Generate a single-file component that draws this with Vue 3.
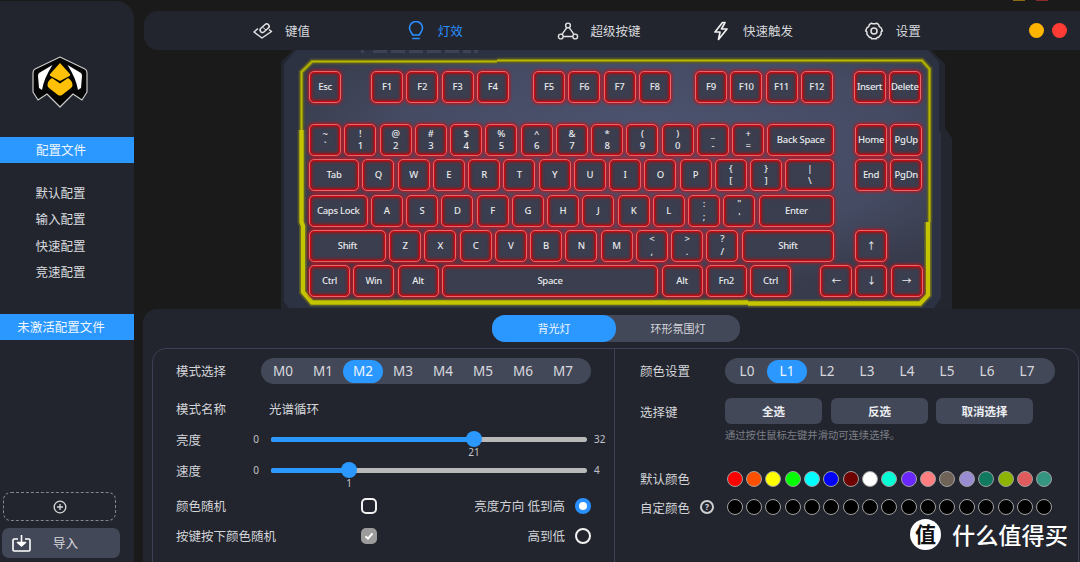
<script setup>
const k = (l, w = 32) => ({ l, w })
const d = (t, b) => ({ t, b, w: 32 })
const s = (sp) => ({ sp })
const keyRows = [
  [k('Esc'), s(23.5), k('F1'), k('F2'), k('F3'), k('F4'), s(17.75), k('F5'), k('F6'), k('F7'), k('F8'), s(17.75), k('F9'), k('F10'), k('F11'), k('F12'), s(14.25), k('Insert'), k('Delete')],
  [d('~', '`'), d('!', '1'), d('@', '2'), d('#', '3'), d('$', '4'), d('%', '5'), d('^', '6'), d('&', '7'), d('*', '8'), d('(', '9'), d(')', '0'), d('_', '-'), d('+', '='), k('Back Space', 67), s(14.25), k('Home'), k('PgUp')],
  [k('Tab', 50), k('Q'), k('W'), k('E'), k('R'), k('T'), k('Y'), k('U'), k('I'), k('O'), k('P'), d('{', '['), d('}', ']'), { t: '|', b: '\\', w: 49 }, s(14.25), k('End'), k('PgDn')],
  [k('Caps Lock', 58.5), k('A'), k('S'), k('D'), k('F'), k('G'), k('H'), k('J'), k('K'), k('L'), d(':', ';'), d('"', "'"), k('Enter', 75.75)],
  [k('Shift', 76.75), k('Z'), k('X'), k('C'), k('V'), k('B'), k('N'), k('M'), d('<', ','), d('>', '.'), d('?', '/'), k('Shift', 92.75), s(14.25), k('↑')],
  [k('Ctrl', 41), k('Win', 41), k('Alt', 41), k('Space', 216.5), k('Alt', 41), k('Fn2', 41), k('Ctrl', 41), s(22.5), k('←'), k('↓'), k('→')]
]
const modes = ['M0', 'M1', 'M2', 'M3', 'M4', 'M5', 'M6', 'M7']
const layers = ['L0', 'L1', 'L2', 'L3', 'L4', 'L5', 'L6', 'L7']
const presets = ['#ff0000', '#ff5000', '#ffff00', '#00ff00', '#00ffff', '#0000ff', '#6e0000', '#ffffff', '#00ffd5', '#6a28ff', '#ff7f80', '#6f6257', '#9a8cd0', '#10795f', '#8cb400', '#e05c5c', '#349680']
const customs = Array.from({ length: 17 }, (_, i) => i)
const profiles = ['默认配置', '输入配置', '快速配置', '竞速配置']
</script>

<template>
  <div class="app">
    <aside class="side">
      <svg class="logo" width="58" height="54" viewBox="31 55 58 54">
        <path d="M60 57 L85 69 Q87 70 87 73 L87 92 L82 100 L73 94 L60 107 L47 94 L38 100 L33 92 L33 73 Q33 70 35 69 Z" fill="#050505" stroke="#c9c9c9" stroke-width="1.2" stroke-linejoin="round"/>
        <path d="M52.5 65 L39 73 Q38 74 38 76 L39 88 L42 90 Q44 78 52.5 65 Z" fill="#fff"/>
        <path d="M67.5 65 L81 73 Q82 74 82 76 L81 88 L78 90 Q76 78 67.5 65 Z" fill="#fff"/>
        <path d="M60 63 L69 73 Q71 75 69.5 76 L60 81 L50.5 76 Q49 75 51 73 Z" fill="#ffc107"/>
        <path d="M52 78 L60 83.5 L68 78 Q72.5 81 72.5 85 Q72.5 87 71 88 L62 95 Q60 96 58 95 L49 88 Q47.5 87 47.5 85 Q47.5 81 52 78 Z" fill="#ffc107"/>
      </svg>
      <div class="band band-top">配置文件</div>
      <ul class="plist">
        <li v-for="p in profiles" :key="p">{{ p }}</li>
      </ul>
      <div class="band band-inactive">未激活配置文件</div>
      <div class="add">
        <svg width="14" height="14" viewBox="0 0 14 14" fill="none" stroke="#d8d8d8" stroke-width="1.3">
          <circle cx="7" cy="7" r="5.8"/><path d="M4 7h6M7 4v6"/>
        </svg>
      </div>
      <div class="import">
        <svg width="20" height="18" viewBox="0 0 20 18" fill="none" stroke="#fff" stroke-width="1.6" stroke-linejoin="round">
          <path d="M6 5H2.2Q1 5 1 6.2V15.8Q1 17 2.2 17H16.8Q18 17 18 15.8V6.2Q18 5 16.8 5H13"/>
          <path d="M9.5 1V10" />
          <path d="M5.5 8.5L9.5 12L13.5 8.5Z" fill="#fff"/>
        </svg>
        <span>导入</span>
      </div>
    </aside>

    <main class="main">
      <header class="top">
        <div class="nav">
          <div class="nav-item">
            <svg class="ic" width="22" height="20" viewBox="0 0 22 20" fill="none" stroke="#e4e4e4" stroke-width="1.5" stroke-linejoin="round">
              <path d="M6 7.5L2 11L10 17L19.5 10.5L17 8.5"/>
              <rect x="-2.2" y="-5.2" width="4.8" height="10.4" rx="2.4" transform="translate(12.5 7) rotate(48)"/>
              <path d="M11 6.5L14 9" stroke-width="1"/>
            </svg>
            <span>键值</span>
          </div>
          <div class="nav-item on">
            <svg class="ic" width="22" height="20" viewBox="0 0 22 20" fill="none" stroke="#2a8fff" stroke-width="1.6" stroke-linecap="round">
              <path d="M7.6 14C7 11.5 4.5 10.5 4.5 7A6.5 6.5 0 0 1 17.5 7C17.5 10.5 15 11.5 14.4 14Z" stroke-linejoin="round"/>
              <path d="M7.8 17.5H14.2"/>
            </svg>
            <span>灯效</span>
          </div>
          <div class="nav-item">
            <svg class="ic" width="22" height="20" viewBox="0 0 22 20" fill="none" stroke="#e4e4e4" stroke-width="1.4">
              <circle cx="11" cy="4.5" r="2.4"/><circle cx="3.8" cy="15.5" r="2.4"/><circle cx="18.2" cy="15.5" r="2.4"/>
              <path d="M9.8 6.6L5 13.4M12.2 6.6L17 13.4M6.2 15.5H15.8"/>
            </svg>
            <span>超级按键</span>
          </div>
          <div class="nav-item">
            <svg class="ic" width="22" height="20" viewBox="0 0 22 20" fill="none" stroke="#f0f0f0" stroke-width="1.7" stroke-linejoin="round">
              <path d="M12.5 1.5L5 11H10L8.5 18.5L17 8H11.5L15 1.5Z"/>
            </svg>
            <span>快速触发</span>
          </div>
          <div class="nav-item">
            <svg class="ic" width="22" height="20" viewBox="0 0 22 20" fill="none" stroke="#e4e4e4" stroke-width="1.5" stroke-linejoin="round">
              <path d="M8.4 2.2Q11 3.4 13.6 2.2L15.6 3.6Q15.8 6 18.2 7L19.4 10Q17.6 10 18.2 13L15.6 16.4Q13.4 16 13.6 17.8H8.4Q8.6 16 6.4 16.4L3.8 13Q4.4 10 2.6 10L3.8 7Q6.2 6 6.4 3.6Z"/>
              <circle cx="11" cy="10" r="3"/>
            </svg>
            <span>设置</span>
          </div>
        </div>
        <div class="winbtns"><i class="dot yellow"></i><i class="dot red"></i></div>
      </header>

      <section class="kb">
        <svg class="casing" width="671" height="259" viewBox="281 50 671 259">
          <defs>
            <radialGradient id="plate" cx="0.55" cy="0.35" r="0.62">
              <stop offset="0" stop-color="#4d5470"/>
              <stop offset="0.65" stop-color="#454b63"/>
              <stop offset="1" stop-color="#373b4b"/>
            </radialGradient>
          </defs>
          <path d="M281 62 L293 50 H931 L945 64 V128 L952 138 V309 H281 Z" fill="#23262f"/>
          <path d="M284 64 L296 50 H928 L939 62 V130 L941 134 V298 L934 308 H289 L284 302 Z" fill="#2d3242"/>
          <g fill="#3f4456" opacity="0.9">
            <rect x="361" y="50" width="3" height="3"/><rect x="373" y="50" width="14" height="3"/><rect x="391" y="50" width="14" height="3"/><rect x="409" y="50" width="14" height="3"/><rect x="427" y="50" width="14" height="3"/><rect x="445" y="50" width="14" height="3"/><rect x="463" y="50" width="8" height="3"/><rect x="474" y="50" width="4" height="3"/>
          </g>
          <path d="M312 61 H922 L930 69 V220 L928 224 V295 L920 304 H311 L302 293 V224 L301 220 V71 Z" fill="url(#plate)"/>
          <path d="M301.5 130 V72 L312 61.5 H497 M497 60.5 H922 L929.5 69 V222" fill="none" stroke="#5c5c22" stroke-width="6" opacity="0.7"/>
          <path d="M301.5 130 V72 L312 61.5 H497 M497 60.5 H922 L929.5 69 V222" fill="none" stroke="#8d8d10" stroke-width="3.2"/>
          <path d="M301.5 130 V72 L312 61.5 H497 M497 60.5 H922 L929.5 69 V222" fill="none" stroke="#b8b800" stroke-width="1.2"/>
          <path d="M301.5 130 V222 L303 226 V292 L312 302.5 H748 M748 303.5 H920 L928 295 V222" fill="none" stroke="#6f6f20" stroke-width="8" opacity="0.6"/>
          <path d="M301.5 130 V222 L303 226 V292 L312 302.5 H748 M748 303.5 H920 L928 295 V222" fill="none" stroke="#c4c400" stroke-width="4.4"/>
        </svg>
        <div class="keys">
          <div v-for="(row, ri) in keyRows" :key="ri" class="krow">
            <template v-for="(c, ci) in row" :key="ci">
              <span v-if="c.sp" :style="{ width: c.sp + 'px' }"></span>
              <div v-else class="key" :style="{ width: c.w + 'px' }">
                <template v-if="c.t"><b>{{ c.t }}</b><b>{{ c.b }}</b></template>
                <template v-else>{{ c.l }}</template>
              </div>
            </template>
          </div>
        </div>
      </section>

      <section class="panel">
        <div class="tabs">
          <div class="tab on">背光灯</div>
          <div class="tab">环形氛围灯</div>
        </div>
        <div class="box">
          <div class="pane left">
            <div class="row r-first">
              <label class="lb lb-mode">模式选择</label>
              <div class="pills">
                <span v-for="m in modes" :key="m" class="pill" :class="{ sel: m === 'M2' }">{{ m }}</span>
              </div>
            </div>
            <div class="row r-name">
              <label class="lb lb-name">模式名称</label>
              <span class="val">光谱循环</span>
            </div>
            <div class="row r-b">
              <label class="lb lb-s">亮度</label>
              <span class="min">0</span>
              <div class="track">
                <i class="fill" style="width: 203px"></i>
                <i class="thumb" style="left: 203px"></i>
                <em class="cur" style="left: 203px">21</em>
              </div>
              <span class="max">32</span>
            </div>
            <div class="row r-s">
              <label class="lb lb-s">速度</label>
              <span class="min">0</span>
              <div class="track">
                <i class="fill" style="width: 78px"></i>
                <i class="thumb" style="left: 78px"></i>
                <em class="cur" style="left: 78px">1</em>
              </div>
              <span class="max">4</span>
            </div>
            <div class="row r-c1">
              <label class="lb lb-c">颜色随机</label>
              <i class="chk"></i>
              <span class="rtext">亮度方向 低到高</span>
              <i class="radio sel"></i>
            </div>
            <div class="row r-c2">
              <label class="lb lb-c">按键按下颜色随机</label>
              <i class="chk done">
                <svg width="10" height="10" viewBox="0 0 10 10" fill="none" stroke="#fff" stroke-width="2"><path d="M1.5 5.2L4 7.6L8.5 2.4"/></svg>
              </i>
              <span class="rtext">高到低</span>
              <i class="radio"></i>
            </div>
          </div>
          <div class="pane right">
            <div class="row r-first">
              <label class="lb lb-r">颜色设置</label>
              <div class="pills">
                <span v-for="m in layers" :key="m" class="pill" :class="{ sel: m === 'L1' }">{{ m }}</span>
              </div>
            </div>
            <div class="row r-sel">
              <label class="lb lb-r lb-flat">选择键</label>
              <button class="btn">全选</button>
              <button class="btn">反选</button>
              <button class="btn">取消选择</button>
            </div>
            <p class="hint">通过按住鼠标左键并滑动可连续选择。</p>
            <div class="row r-def">
              <label class="lb lb-r">默认颜色</label>
              <div class="swatches">
                <i v-for="c in presets" :key="c" class="sw" :style="{ background: c }"></i>
              </div>
            </div>
            <div class="row r-cus">
              <label class="lb lb-q lb-flat">自定颜色<i class="q">?</i></label>
              <div class="swatches">
                <i v-for="c in customs" :key="c" class="sw black"></i>
              </div>
            </div>
          </div>
        </div>
      </section>
    </main>

    <i class="edge edge-a"></i>
    <i class="edge edge-b"></i>
    <div class="wm">
      <span class="wm-c">值</span>
      <span class="wm-t">什么值得买</span>
    </div>
  </div>
</template>

<style>
html, body { margin: 0; background: #1a1a1b; overflow: hidden; }
</style>

<style scoped>
.app {
  position: relative;
  display: flex;
  width: 1080px;
  height: 562px;
  overflow: hidden;
  background: #1a1a1b;
  color: #d4d6da;
  font-family: "Noto Sans", "Noto Sans CJK SC", sans-serif;
  font-size: 12.5px;
}
.edge { position: absolute; top: 0; height: 1px; width: 12px; }
.edge-a { left: 1013px; background: #8a6a12; }
.edge-b { left: 1036px; background: #8a2a28; }
.side {
  width: 134px;
  height: 561px;
  margin-top: 1px;
  background: #22252e;
  border-top-right-radius: 18px;
  display: flex;
  flex-direction: column;
  position: relative;
}
.logo { margin: 54px 0 0 31px; display: block; flex: none; }
.band {
  height: 26px;
  line-height: 28px;
  background: #2a98ff;
  color: #eef6ff;
  text-align: center;
  padding-right: 12px;
  flex: none;
}
.band-top { margin-top: 28px; }
.band-inactive { margin-top: 29px; }
.plist { list-style: none; margin: 18px 0 -1px; padding: 0; flex: none; }
.plist li { height: 26.3px; line-height: 26.3px; text-align: center; padding-right: 13px; color: #d9dbdf; }
.add {
  margin: auto 0 0 3px;
  width: 111px;
  height: 27px;
  border: 1.5px dashed #85878e;
  border-radius: 8px;
  display: flex;
  align-items: center;
  justify-content: center;
  flex: none;
}
.import {
  margin: 7px 0 4px 2px;
  width: 118px;
  height: 30px;
  background: #434859;
  border-radius: 7px;
  display: flex;
  align-items: center;
  padding-left: 10px;
  box-sizing: border-box;
  flex: none;
}
.import svg { flex: none; }
.import span { margin-left: 21px; margin-top: -2px; color: #d8d9dd; }

.main { flex: 1; min-width: 0; display: flex; flex-direction: column; }
.top {
  margin: 11px 0 0 10px;
  height: 39px;
  background: #22252e;
  border-radius: 14px 0 0 14px;
  display: flex;
  align-items: center;
  padding-left: 108px;
  position: relative;
  z-index: 2;
  flex: none;
}
.nav { display: flex; }
.nav-item { width: 152.7px; display: flex; align-items: center; color: #d6d8dc; }
.nav-item .ic { margin-right: 11px; flex: none; }
.nav-item.on { color: #2a8fff; }
.winbtns { margin-left: 13.5px; display: flex; gap: 8px; }
.dot { width: 15px; height: 15px; border-radius: 50%; display: block; }
.yellow { background: #ffb400; }
.red { background: #ff3b36; }

.kb {
  margin-left: 147px;
  width: 671px;
  height: 259px;
  position: relative;
  flex: none;
}
.casing { position: absolute; left: 0; top: 0; display: block; }
.keys { position: relative; padding: 21px 0 0 28px; display: flex; flex-direction: column; gap: 3.25px; }
.krow { display: flex; gap: 3.25px; height: 32px; }
.krow:nth-child(2) { margin-top: 17.75px; }
.key {
  height: 32px;
  box-sizing: border-box;
  flex: none;
  border: 1px solid #e2686e;
  border-radius: 5px;
  background: #3a3e4e;
  box-shadow: 0 0 3px 1px #c8101a, inset 0 0 0 1px #c40c14, inset 0 0 3px 2px #a81218;
  color: #e8e9ec;
  font-size: 9.5px;
  font-weight: 500;
  letter-spacing: -0.3px;
  display: flex;
  flex-direction: column;
  align-items: center;
  justify-content: center;
  white-space: nowrap;
  line-height: 12px;
}
.key b { font-weight: 500; display: block; line-height: 12.5px; }

.panel {
  margin-left: 9px;
  flex: 1;
  background: #22252e;
  border-top-left-radius: 14px;
  position: relative;
  z-index: 3;
  min-height: 0;
}
.tabs {
  position: absolute;
  left: 349px;
  top: 6px;
  width: 248px;
  height: 27px;
  background: #434859;
  border-radius: 13px;
  display: flex;
  font-size: 11px;
}
.tab { height: 27px; line-height: 27px; text-align: center; color: #d4d6da; }
.tab.on { width: 124px; background: #2a98ff; border-radius: 13px; color: #f1f7ff; }
.tab:not(.on) { flex: 1; }
.box {
  position: absolute;
  left: 9px;
  top: 39px;
  width: 927px;
  height: 260px;
  box-sizing: border-box;
  border: 1.5px solid #3b4054;
  border-radius: 14px;
  display: flex;
}
.pane { box-sizing: border-box; }
.left { width: 462px; padding-left: 23px; border-right: 1.5px solid #3b4054; }
.right { padding-left: 25px; flex: 1; }
.row { display: flex; align-items: center; }
.lb { display: block; flex: none; color: #d2d4d8; font-size: 12.5px; padding-bottom: 2px; }
.lb-mode { width: 85px; }
.lb-name { width: 93px; }
.lb-s { width: 74px; padding-bottom: 0; }
.lb-c { width: 185px; }
.lb-r { width: 85px; }
.lb-flat { padding-bottom: 0; }
.val { padding-bottom: 2px; }
.r-first { margin-top: 9px; height: 26px; }
.r-name { margin-top: 12px; height: 26px; }
.r-b { margin-top: 5px; height: 24px; }
.r-s { margin-top: 7px; height: 24px; }
.r-c1 { margin-top: 12px; height: 24px; width: 415px; }
.r-c2 { margin-top: 6px; height: 24px; width: 415px; }
.val { color: #d4d6da; font-size: 12.5px; }
.pills {
  width: 330px;
  height: 26px;
  background: #434859;
  border-radius: 13px;
  display: flex;
  align-items: center;
  box-sizing: border-box;
  padding-left: 2px;
}
.pill {
  width: 40px;
  height: 23px;
  line-height: 22px;
  text-align: center;
  border-radius: 12px;
  font-size: 13.5px;
  color: #d7d9de;
}
.pill.sel { background: #2a98ff; color: #eef6ff; }
.min, .max { font-size: 10px; color: #c2c4c9; }
.min { width: 12px; text-align: center; }
.track {
  position: relative;
  margin-left: 9px;
  width: 316px;
  height: 5px;
  border-radius: 3px;
  background: #b9b9b9;
}
.fill { position: absolute; left: 0; top: 0; height: 5px; background: #2a98ff; border-radius: 3px; }
.thumb {
  position: absolute;
  top: -5.5px;
  width: 16px;
  height: 16px;
  margin-left: -8px;
  border-radius: 50%;
  background: #2a98ff;
}
.cur {
  position: absolute;
  top: 9px;
  width: 20px;
  margin-left: -10px;
  text-align: center;
  font-style: normal;
  font-size: 10px;
  line-height: 12px;
  color: #c2c4c9;
}
.max { margin-left: 7px; }
.chk {
  width: 16px;
  height: 16px;
  box-sizing: border-box;
  border: 2px solid #f2f2f2;
  border-radius: 5px;
  display: flex;
  align-items: center;
  justify-content: center;
  flex: none;
}
.chk.done { background: #9c9c9c; border-color: #9c9c9c; }
.rtext { margin-left: auto; color: #cfd1d5; padding-bottom: 2px; }
.radio {
  margin-left: 10px;
  width: 16px;
  height: 16px;
  box-sizing: border-box;
  border: 2px solid #f2f2f2;
  border-radius: 50%;
  flex: none;
}
.radio.sel { border: 4px solid #2a8fff; background: #fff; }
.r-sel { margin-top: 14px; height: 26px; }
.btn {
  width: 97px;
  height: 26px;
  margin: 0 11px 0 0;
  padding: 0;
  border: 0;
  border-radius: 6px;
  background: #434859;
  color: #eceef2;
  font: 600 11.5px "Noto Sans", "Noto Sans CJK SC", sans-serif;
}
.btn:first-of-type { margin-right: 9px; }
.btn:nth-of-type(2) { margin-right: 8px; }
.hint { margin: 4px 0 0 85px; font-size: 10.3px; line-height: 15px; color: #7c7f87; }
.r-def { margin-top: 24px; height: 24px; }
.r-cus { margin-top: 4px; height: 24px; }
.lb-q { width: 74px; margin-right: 11px; display: flex; align-items: center; justify-content: space-between; }
.q {
  width: 14px;
  height: 14px;
  box-sizing: border-box;
  border: 2px solid #cfcfcf;
  border-radius: 50%;
  font: 700 8.5px/10px "Noto Sans", sans-serif;
  text-align: center;
  color: #d8d8d8;
}
.swatches { display: flex; gap: 3.35px; margin-left: 1.7px; }
.sw {
  width: 16px;
  height: 16px;
  box-sizing: border-box;
  border-radius: 50%;
  border: 1.5px solid #a0a0a0;
  flex: none;
  display: block;
}
.sw.black { background: #000; }

.wm { position: absolute; z-index: 5; left: 910px; top: 519px; display: flex; align-items: center; }
.wm-c {
  width: 31px;
  height: 31px;
  border-radius: 50%;
  background: #fff;
  color: #111;
  font-size: 21px;
  font-weight: 700;
  line-height: 31px;
  text-align: center;
}
.wm-t { margin-left: 11px; font-size: 23.2px; line-height: 31px; color: #fff; white-space: nowrap; font-family: "Noto Sans CJK SC", sans-serif; font-weight: 500; }
</style>
